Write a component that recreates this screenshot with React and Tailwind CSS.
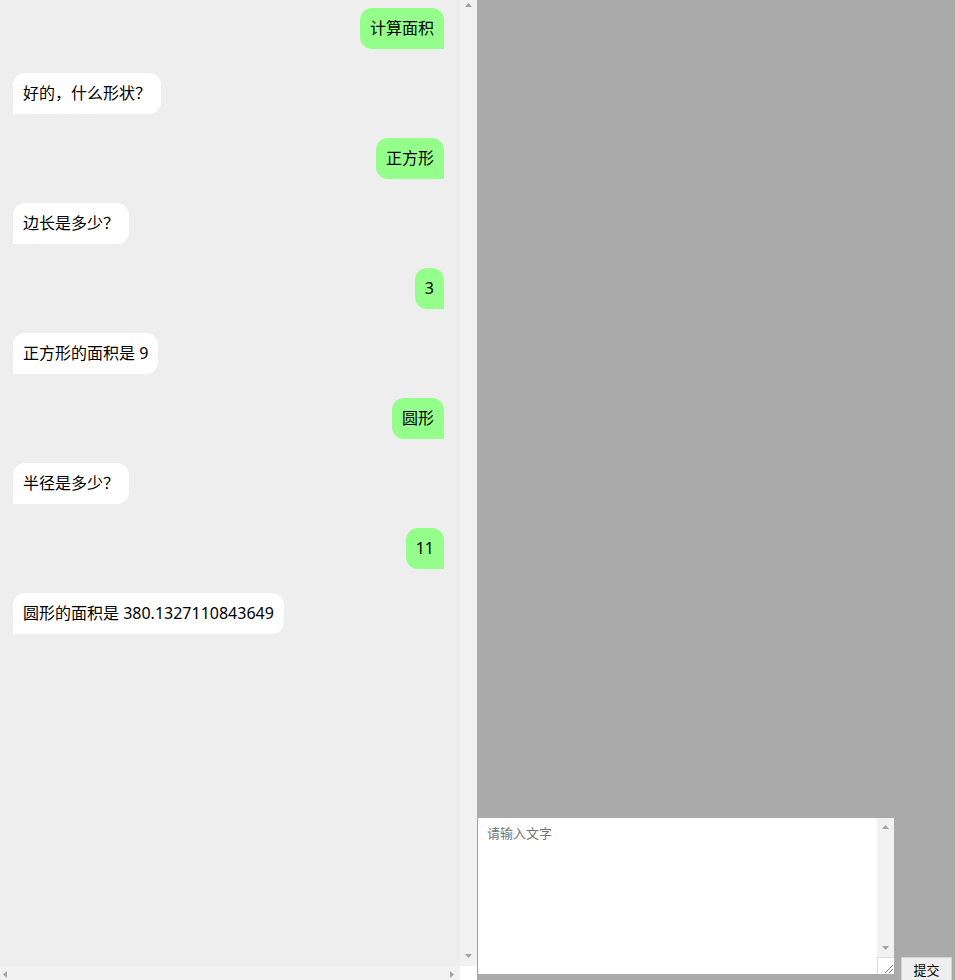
const messages = [
  { from: 'me', text: '计算面积' },
  { from: 'bot', text: '好的，什么形状？' },
  { from: 'me', text: '正方形' },
  { from: 'bot', text: '边长是多少？' },
  { from: 'me', text: '3' },
  { from: 'bot', text: '正方形的面积是 9' },
  { from: 'me', text: '圆形' },
  { from: 'bot', text: '半径是多少？' },
  { from: 'me', text: '11' },
  { from: 'bot', text: '圆形的面积是 380.1327110843649' },
]

// small scrollbar arrow triangles
function Arrow({ dir }) {
  const pts = {
    up: '0,4 3.5,0 7,4',
    down: '0,0 7,0 3.5,4',
    left: '4,0 4,7 0,3.5',
    right: '0,0 0,7 4,3.5',
  }[dir]
  const vertical = dir === 'up' || dir === 'down'
  return (
    <svg width={vertical ? 7 : 4} height={vertical ? 4 : 7} className="block">
      <polygon points={pts} fill="#a3a3a3" />
    </svg>
  )
}

export default function App() {
  return (
    <div
      className="h-[980px] w-[955px] overflow-hidden flex"
      style={{ fontFamily: '"Noto Sans", "Noto Sans CJK SC", sans-serif' }}
    >
      {/* Chat list with its scrollbars */}
      <div className="w-[477px] h-[983px] shrink-0 flex flex-col">
        <div className="flex flex-1 min-h-0">
          <div className="flex-1 bg-[#eeeeee] overflow-hidden">
            <div className="flex flex-col gap-[24px] pt-[8px] pl-[13px] pr-[16px]">
              {messages.map((m, i) =>
                m.from === 'me' ? (
                  <div key={i} className="flex justify-end">
                    <div className="bg-[#95ff8c] text-black text-[16px] leading-[21px] p-[10px] rounded-tl-[12px] rounded-tr-[12px] rounded-bl-[12px] whitespace-nowrap">
                      {m.text}
                    </div>
                  </div>
                ) : (
                  <div key={i} className="flex justify-start">
                    <div className="bg-white text-black text-[16px] leading-[21px] p-[10px] rounded-tl-[12px] rounded-tr-[12px] rounded-br-[12px] whitespace-nowrap">
                      {m.text}
                    </div>
                  </div>
                )
              )}
            </div>
          </div>
          <div className="w-[17px] bg-[#f1f1f1] flex flex-col justify-between items-center pt-[3px] pb-[8px]">
            <Arrow dir="up" />
            <Arrow dir="down" />
          </div>
        </div>
        <div className="h-[17px] flex">
          <div className="flex-1 bg-[#f1f1f1] flex justify-between items-center px-[3px]">
            <Arrow dir="left" />
            <div className="mr-[3px]">
              <Arrow dir="right" />
            </div>
          </div>
          <div className="w-[17px] bg-white" />
        </div>
      </div>

      {/* Input side */}
      <div className="flex-1 bg-[#aaaaaa] flex items-end">
        <div className="w-[417px] h-[156px] mb-[6px] border-l border-[#a0a0a0] bg-white flex">
          <textarea
            placeholder="请输入文字"
            className="flex-1 h-full bg-white pl-[9px] pt-[6px] text-[13px] leading-[18px] resize-none outline-none overflow-hidden placeholder:text-[#757575]"
          />
          <div className="w-[17px] flex flex-col">
            <div className="flex-1 bg-[#f1f1f1] flex flex-col justify-between items-center pt-[7px] pb-[7px]">
              <Arrow dir="up" />
              <Arrow dir="down" />
            </div>
            <div className="h-[17px] bg-white border-t border-l border-[#dcdcdc] flex items-end justify-end p-[1px]">
              <svg width="9" height="9" className="block">
                <line x1="1" y1="9" x2="9" y2="1" stroke="#7a7a7a" strokeWidth="1" />
                <line x1="5" y1="9" x2="9" y2="5" stroke="#7a7a7a" strokeWidth="1" />
              </svg>
            </div>
          </div>
        </div>
        <button className="ml-[7px] mb-[-3px] h-[26px] w-[51px] bg-[#efefef] border border-[#d4d4d4] text-[13px] text-black leading-none">
          提交
        </button>
      </div>
    </div>
  )
}
